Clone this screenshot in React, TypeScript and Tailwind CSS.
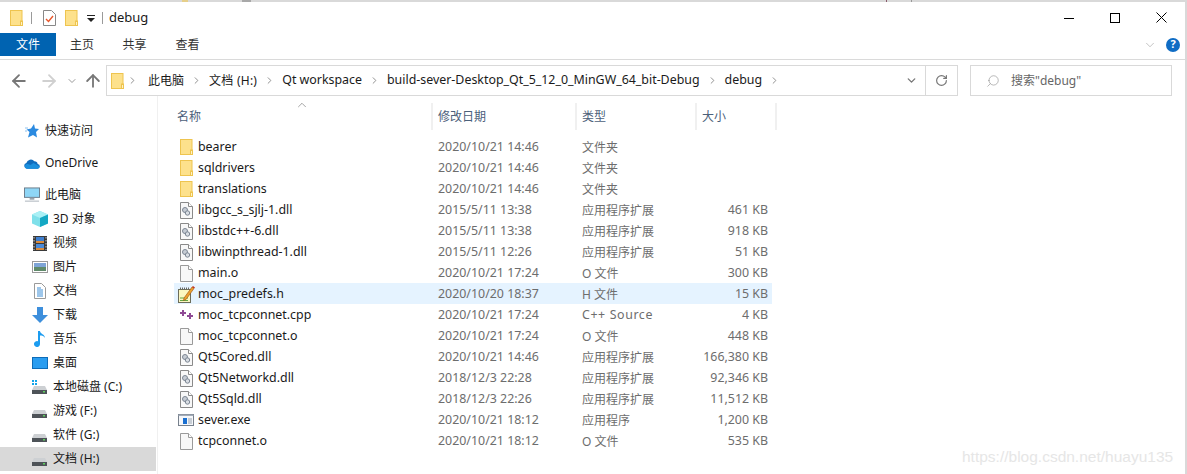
import React from 'react';
import { ArrowLeft, ArrowRight, ArrowUp, ChevronDown, ChevronRight, ChevronUp, RotateCw, Search } from 'lucide-react';

const FONT = "font-['Noto_Sans','Noto_Sans_CJK_SC',sans-serif]";

const Folder: React.FC = () => (
  <svg width="13" height="16" viewBox="0 0 13 16">
    <rect x="0.5" y="0.5" width="11.500" height="15" fill="#fde18c" stroke="#eec44f" />
    <rect x="10.500" y="11" width="2" height="4.500" fill="#fff3c4" stroke="#eec44f" />
  </svg>
);

const Page: React.FC = () => (
  <svg width="13" height="17" viewBox="0 0 13 17">
    <path d="M.5.5h8l4 4v12H.5z" fill="#f8f8f8" stroke="#9a9a9a" />
    <path d="M8.500.5v4h4" fill="#fff" stroke="#9a9a9a" />
  </svg>
);

const Dll: React.FC = () => (
  <svg width="13" height="17" viewBox="0 0 13 17">
    <path d="M.5.5h8l4 4v12H.5z" fill="#f8f8f8" stroke="#8a8a8a" />
    <path d="M8.500.5v4h4" fill="#fff" stroke="#8a8a8a" />
    <circle cx="5" cy="8" r="2.500" fill="#c6ccd4" stroke="#7d8794" />
    <circle cx="7.500" cy="11" r="2.200" fill="#d8dde3" stroke="#7d8794" />
  </svg>
);

const Notepad: React.FC = () => (
  <svg width="17" height="17" viewBox="0 0 17 17">
    <rect x="0.5" y="3.500" width="12" height="13" fill="#fbf7c0" stroke="#6d6d5a" />
    <path d="M2.500 3V1.500m2 1.500V1.500m2 1.500V1.500m2 1.500V1.500m2 1.500V1.500" stroke="#666" />
    <path d="M2 12h8M2 14.500h8" stroke="#62a745" />
    <path d="M6 12l8-11 2 1.500-8 11-2.500 1z" fill="#eba02c" stroke="#9c4f12" strokeWidth=".6" />
    <path d="M14 1l1-1 2 1.500-1 1z" fill="#c5321f" />
  </svg>
);

const Cpp: React.FC = () => (
  <svg width="13" height="10" viewBox="0 0 13 10">
    <path d="M3 0v6M0 3h6" stroke="#8e4a95" strokeWidth="2" />
    <path d="M10 3v6M7 6h6" stroke="#8e4a95" strokeWidth="2" />
  </svg>
);

const Exe: React.FC = () => (
  <svg width="16" height="12" viewBox="0 0 16 12">
    <rect x="0.5" y="0.5" width="15" height="11" fill="#f5f7fa" stroke="#77808c" />
    <rect x="0.5" y="0.5" width="15" height="1.500" fill="#a3acb8" />
    <rect x="5" y="4" width="4" height="6" fill="#1a6fd0" />
    <path d="M10 5h4M10 7h4M10 9h4" stroke="#9aa4b0" />
  </svg>
);

const Drive: React.FC<{ windows?: boolean }> = ({ windows }) => (
  <svg width="16" height="14" viewBox="0 0 16 14">
    {windows && <path d="M0 0h2v2H0zM3 0h2v2H3zM0 3h2v2H0zM3 3h2v2H3z" fill="#12a5ea" />}
    <path d="M2 6h11l2 4H0z" fill="#cdd0d3" />
    <rect y="10" width="15" height="4" fill="#4e5358" />
    <rect x="11" y="11" width="2" height="1.500" fill="#5fd05f" />
  </svg>
);

const NavIcon: React.FC<{ kind: string }> = ({ kind }) => {
  switch (kind) {
    case 'star':
      return (
        <svg width="14" height="14" viewBox="0 0 14 14">
          <path d="M9 0l1 4.500 4 .5-3 3 1 5.500-4-2.500L3 13.500l1.500-5.500L1.500 5.500 6 4.500z" fill="#2b8ae0" />
          <path d="M0 4h3M0 7h2" stroke="#8cc0ee" />
        </svg>
      );
    case 'cloud':
      return (
        <svg width="17" height="11" viewBox="0 0 17 11">
          <path d="M3 11a3 3 0 0 1-.5-5.900A5 5 0 0 1 11 3a3.500 3.500 0 0 1 3.500 3A2.500 2.500 0 0 1 14 11z" fill="#0f6cbd" />
          <path d="M3 11a2.500 2.500 0 0 1 1-5l3 1 3-2 4 2 3 2-2 2z" fill="#1a8fdd" />
        </svg>
      );
    case 'pc':
      return (
        <svg width="17" height="16" viewBox="0 0 17 16">
          <rect x="0.5" y="0.5" width="16" height="10" fill="#8fd6f6" stroke="#6a7a88" />
          <rect x="6" y="11" width="5" height="2" fill="#9aa4ae" />
          <rect x="1" y="14" width="15" height="1" fill="#a8b0b8" />
        </svg>
      );
    case 'cube':
      return (
        <svg width="16" height="16" viewBox="0 0 16 16">
          <path d="M8 0l8 3.500v9L8 16 0 12.500v-9z" fill="#7fe0ea" />
          <path d="M8 0l8 3.500L8 7 0 3.500z" fill="#aaf0f5" />
          <path d="M8 7l8-3.500v9L8 16z" fill="#14a8c4" />
        </svg>
      );
    case 'film':
      return (
        <svg width="14" height="15" viewBox="0 0 14 15">
          <rect width="14" height="15" fill="#3a3a3a" />
          <rect x="3" y="1" width="8" height="6" fill="#3f7fd0" />
          <rect x="3" y="8" width="8" height="6" fill="#4a8ad8" />
          <rect x="3" y="5" width="8" height="2" fill="#d98a3a" />
          <rect x="3" y="12" width="8" height="2" fill="#d98a3a" />
          <path d="M1 1v13M13 1v13" stroke="#ccc" strokeDasharray="1.500 1.500" />
        </svg>
      );
    case 'image':
      return (
        <svg width="16" height="12" viewBox="0 0 16 12">
          <rect x="0.5" y="0.5" width="15" height="11" fill="#fff" stroke="#9a9a9a" />
          <rect x="2" y="2" width="12" height="4" fill="#7ea4d6" />
          <rect x="2" y="6" width="12" height="4" fill="#5f8a6a" />
        </svg>
      );
    case 'doc':
      return (
        <svg width="12" height="16" viewBox="0 0 12 16">
          <path d="M.5.5h7l4 4v11H.5z" fill="#fff" stroke="#9a9a9a" />
          <path d="M3 5h4M3 7h6M3 9h6M3 11h6M3 13h6" stroke="#3d8ed6" />
        </svg>
      );
    case 'down':
      return (
        <svg width="16" height="16" viewBox="0 0 16 16">
          <path d="M5 0h6v8h5l-8 8-8-8h5z" fill="#3d8fdc" />
        </svg>
      );
    case 'music':
      return (
        <svg width="12" height="16" viewBox="0 0 12 16">
          <path d="M4 0h2c0 3 5 3 5 7-1-2-3-2.500-5-2.500V13a3 3 0 1 1-2-2.800z" fill="#1c9cf0" />
        </svg>
      );
    case 'desk':
      return (
        <svg width="16" height="12" viewBox="0 0 16 12">
          <rect x="0.5" y="0.5" width="15" height="11" fill="#2a9df0" stroke="#0e6cb8" />
        </svg>
      );
    case 'c':
      return <Drive windows />;
    default:
      return <Drive />;
  }
};

const pcItems = [
  ['cube', '3D 对象'],
  ['film', '视频'],
  ['image', '图片'],
  ['doc', '文档'],
  ['down', '下载'],
  ['music', '音乐'],
  ['desk', '桌面'],
  ['c', '本地磁盘 (C:)'],
  ['drive', '游戏 (F:)'],
  ['drive', '软件 (G:)'],
  ['drive', '文档 (H:)'],
];

type Row = { icon: React.ReactNode; name: string; date: string; type: string; size?: string; hot?: boolean };

const rows: Row[] = [
  { icon: <Folder />, name: 'bearer', date: '2020/10/21 14:46', type: '文件夹' },
  { icon: <Folder />, name: 'sqldrivers', date: '2020/10/21 14:46', type: '文件夹' },
  { icon: <Folder />, name: 'translations', date: '2020/10/21 14:46', type: '文件夹' },
  { icon: <Dll />, name: 'libgcc_s_sjlj-1.dll', date: '2015/5/11 13:38', type: '应用程序扩展', size: '461 KB' },
  { icon: <Dll />, name: 'libstdc++-6.dll', date: '2015/5/11 13:38', type: '应用程序扩展', size: '918 KB' },
  { icon: <Dll />, name: 'libwinpthread-1.dll', date: '2015/5/11 12:26', type: '应用程序扩展', size: '51 KB' },
  { icon: <Page />, name: 'main.o', date: '2020/10/21 17:24', type: 'O 文件', size: '300 KB' },
  { icon: <Notepad />, name: 'moc_predefs.h', date: '2020/10/20 18:37', type: 'H 文件', size: '15 KB', hot: true },
  { icon: <Cpp />, name: 'moc_tcpconnet.cpp', date: '2020/10/21 17:24', type: 'C++ Source', size: '4 KB' },
  { icon: <Page />, name: 'moc_tcpconnet.o', date: '2020/10/21 17:24', type: 'O 文件', size: '448 KB' },
  { icon: <Dll />, name: 'Qt5Cored.dll', date: '2020/10/21 14:46', type: '应用程序扩展', size: '166,380 KB' },
  { icon: <Dll />, name: 'Qt5Networkd.dll', date: '2018/12/3 22:28', type: '应用程序扩展', size: '92,346 KB' },
  { icon: <Dll />, name: 'Qt5Sqld.dll', date: '2018/12/3 22:26', type: '应用程序扩展', size: '11,512 KB' },
  { icon: <Exe />, name: 'sever.exe', date: '2020/10/21 18:12', type: '应用程序', size: '1,200 KB' },
  { icon: <Page />, name: 'tcpconnet.o', date: '2020/10/21 18:12', type: 'O 文件', size: '535 KB' },
];

const crumbs = [
  { label: '此电脑', cls: 'text-[12px] ml-[3px]' },
  { label: '文档 (H:)', cls: 'text-[12px] tracking-[0.25px]' },
  { label: 'Qt workspace', cls: 'text-[12.4px]' },
  { label: 'build-sever-Desktop_Qt_5_12_0_MinGW_64_bit-Debug', cls: 'text-[12.4px]' },
  { label: 'debug', cls: 'text-[12.4px]' },
];

const Sidebar: React.FC = () => (
  <div className="w-[158px] shrink-0 flex flex-col pt-[23px] border-r border-[#f0f0f0] text-[12px] text-[#1a1a1a]">
    <div className="flex items-center pl-[24px] gap-[5px] h-[24px]">
      <span className="w-[16px] flex justify-center"><NavIcon kind="star" /></span>
      <span>快速访问</span>
    </div>
    <div className="flex items-center pl-[24px] gap-[5px] h-[24px] mt-[8px]">
      <span className="w-[16px] flex justify-center"><NavIcon kind="cloud" /></span>
      <span>OneDrive</span>
    </div>
    <div className="flex items-center pl-[24px] gap-[5px] h-[24px] mt-[8px]">
      <span className="w-[16px] flex justify-center"><NavIcon kind="pc" /></span>
      <span>此电脑</span>
    </div>
    {pcItems.map(([icon, label], i) => (
      <div
        key={label}
        className={`flex items-center w-[156px] pl-[32px] gap-[5px] h-[24px] ${i === pcItems.length - 1 ? 'bg-[#d9d9d9]' : ''}`}
      >
        <span className="w-[16px] flex justify-center"><NavIcon kind={icon} /></span>
        <span>{label}</span>
      </div>
    ))}
  </div>
);

const FileList: React.FC = () => (
  <div className="flex-1 flex flex-col min-w-0">
    <div className="relative flex h-[27px] mt-[7px] text-[12px] text-[#4c607a]">
      <ChevronUp size={14} strokeWidth={1} className="absolute left-[137px] -top-[5px] text-[#666]" />
      <div className="w-[275px] pl-[19px] flex items-center border-r-2 border-[#f0f0f0]">名称</div>
      <div className="w-[144px] pl-[5px] flex items-center border-r-2 border-[#f0f0f0]">修改日期</div>
      <div className="w-[120px] pl-[5px] flex items-center border-r-2 border-[#f0f0f0]">类型</div>
      <div className="w-[80px] pl-[5px] flex items-center border-r-2 border-[#f0f0f0]">大小</div>
    </div>
    <div className="mt-[6px] flex flex-col text-[12.4px] ml-[16px] w-[598px]">
      {rows.map((r) => (
        <div key={r.name} className={`flex items-center h-[21px] pt-[2px] ${r.hot ? 'bg-[#e5f3ff]' : ''}`}>
          <div className="w-[258px] flex items-center text-[#1a1a1a]">
            <span className="w-[24px] flex justify-center shrink-0">{r.icon}</span>
            <span>{r.name}</span>
          </div>
          <div className="w-[144px] pl-[6px] text-[#6d6d6d]">{r.date}</div>
          <div className={`w-[120px] pl-[6px] text-[#6d6d6d] ${r.type === 'C++ Source' ? 'tracking-[0.6px]' : 'text-[12px]'}`}>{r.type}</div>
          <div className="w-[72px] text-right text-[#6d6d6d]">{r.size}</div>
        </div>
      ))}
    </div>
  </div>
);

const App: React.FC = () => (
  <div className={`${FONT} relative w-[1187px] h-[474px] overflow-hidden bg-[#d9d9d9] pt-[2px] pr-[2px]`}>
    {/* bits of the window behind, showing along the top edge */}
    <span className="absolute left-[182px] top-0 w-[6px] h-[2px] bg-[#e6cf8a]" />
    <span className="absolute left-[242px] top-0 w-[9px] h-[2px] bg-[#a8a8a8]" />
    <span className="absolute left-[886px] top-0 w-px h-[2px] bg-[#8a5a6a]" />
    <span className="absolute left-[911px] top-0 w-px h-[2px] bg-[#999]" />
    <div className="bg-white h-full flex flex-col">
      {/* title bar */}
      <div className="flex items-center h-[31px] shrink-0">
        <div className="flex items-center pl-[10px] text-[13px] text-[#1a1a1a]">
          <Folder />
          <span className="w-px h-[12px] bg-[#9a9a9a] ml-[8px]" />
          <span className="ml-[11px] flex">
            <svg width="13" height="16" viewBox="0 0 13 16">
              <path d="M.5.5h8l4 4v11H.5z" fill="#fff" stroke="#888" />
              <path d="M3 9l2.500 2.500L10 6" fill="none" stroke="#e8562a" strokeWidth="1.400" />
            </svg>
          </span>
          <span className="ml-[9px] flex"><Folder /></span>
          <svg width="9" height="8" viewBox="0 0 9 8" className="ml-[9px] mt-[3px]">
            <path d="M0 0h8v1H0zM0 3h8L4 7z" fill="#222" />
          </svg>
          <span className="w-px h-[12px] bg-[#9a9a9a] ml-[6px]" />
          <span className="ml-[6px]">debug</span>
        </div>
        <div className="ml-auto flex items-center pr-[1px]">
          <span className="w-[46px] flex justify-center">
            <svg width="10" height="10" viewBox="0 0 10 10"><path d="M0 5.500h10" stroke="#000" /></svg>
          </span>
          <span className="w-[46px] flex justify-center">
            <svg width="10" height="10" viewBox="0 0 10 10"><rect x="0.5" y="0.5" width="9" height="9" fill="none" stroke="#000" /></svg>
          </span>
          <span className="w-[46px] flex justify-center">
            <svg width="11" height="11" viewBox="0 0 11 11"><path d="M.5.5l10 10M10.500.5l-10 10" stroke="#000" /></svg>
          </span>
        </div>
      </div>
      {/* ribbon tabs */}
      <div className="flex items-start h-[27px] shrink-0 border-b border-[#dadada] text-[12px] text-[#333]">
        <div className="w-[56px] h-[23px] bg-[#0063b1] text-white flex items-center justify-center">文件</div>
        <div className="w-[52px] h-[23px] flex items-center justify-center">主页</div>
        <div className="w-[53px] h-[23px] flex items-center justify-center">共享</div>
        <div className="w-[53px] h-[23px] flex items-center justify-center">查看</div>
        <div className="ml-auto h-[23px] flex items-center gap-[9px] pr-[5px]">
          <ChevronDown size={14} strokeWidth={1} className="text-[#999]" />
          <span className="w-[14px] h-[14px] rounded-full bg-[#0f6cc4] text-white text-[11px] font-bold flex items-center justify-center">?</span>
        </div>
      </div>
      {/* address bar */}
      <div className="flex items-center h-[36px] pt-[5px] shrink-0 text-[12px]">
        <div className="flex items-center pl-[9px] w-[106px]">
          <ArrowLeft size={20} strokeWidth={2.2} className="text-[#777]" />
          <ArrowRight size={20} strokeWidth={2.2} className="text-[#d0d0d0] ml-[10px]" />
          <ChevronDown size={12} strokeWidth={2} className="text-[#999] ml-[7px]" />
          <ArrowUp size={20} strokeWidth={2.2} className="text-[#777] ml-[5px]" />
        </div>
        <div className="flex items-center w-[852px] h-[31px] border border-[#d9d9d9] text-[#1a1a1a]">
          <span className="ml-[4px] -mr-[4px] flex"><Folder /></span>
          {crumbs.map((c) => (
            <React.Fragment key={c.label}>
              <ChevronRight size={11} strokeWidth={2} className="text-[#888] mx-[7px] shrink-0" />
              <span className={`${c.cls} whitespace-nowrap`}>{c.label}</span>
            </React.Fragment>
          ))}
          <ChevronRight size={11} strokeWidth={2} className="text-[#888] ml-[7px] shrink-0" />
          <ChevronDown size={13} strokeWidth={2.5} className="ml-auto mr-[7px] text-[#777]" />
          <span className="h-full w-[32px] border-l border-[#d9d9d9] flex items-center justify-center">
            <RotateCw size={13} strokeWidth={2.2} className="text-[#777]" />
          </span>
        </div>
        <div className="ml-[12px] flex items-center w-[202px] h-[31px] border border-[#d9d9d9] pl-[15px] gap-[11px] text-[#666]">
          <Search size={14} strokeWidth={1} className="text-[#888] -scale-x-100" />
          <span>搜索"debug"</span>
        </div>
      </div>
      {/* sidebar and file list */}
      <div className="flex flex-1 min-h-0">
        <Sidebar />
        <FileList />
      </div>
    </div>
    <span className="absolute left-[962px] top-[445px] text-[15.5px] text-[#e6e6e6] font-['Liberation_Sans',sans-serif]">
      https://blog.csdn.net/huayu135
    </span>
  </div>
);

export default App;
